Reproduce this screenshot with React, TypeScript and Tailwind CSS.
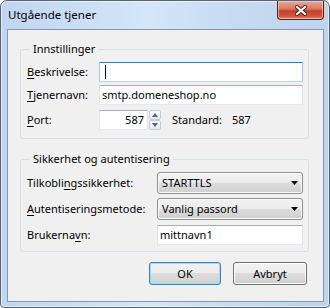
import React from "react";

const font = { fontFamily: '"Noto Sans", "Open Sans", sans-serif' };

const Key: React.FC<{ children: React.ReactNode }> = ({ children }) => (
  <span className="underline underline-offset-[2px] decoration-[1px]">{children}</span>
);

const CloseButton: React.FC = () => (
  <div className="w-[47px] h-[19px] rounded-b-[4px] border border-t-0 border-[#5b2016] bg-[linear-gradient(to_bottom,#e9a99a_0%,#d8765f_45%,#c4402a_55%,#d0583d_85%,#e38a6c_100%)] shadow-[inset_0_0_0_1px_rgba(255,220,210,0.55)] flex items-center justify-center">
    <svg width="12" height="11" viewBox="0 0 12 11">
      <path d="M2 2 L10 9 M10 2 L2 9" stroke="#4a1a12" strokeWidth="4" strokeLinecap="square" />
      <path d="M2 2 L10 9 M10 2 L2 9" stroke="#ffffff" strokeWidth="2.2" strokeLinecap="square" />
    </svg>
  </div>
);

const TextBox: React.FC<{ value?: string; width: string; focused?: boolean; right?: boolean }> = ({
  value,
  width,
  focused,
  right,
}) => (
  <div
    className={`${width} h-[20px] bg-white border flex items-center ${
      focused
        ? "border-[#a4c9e3] border-t-[#3d7bad] border-b-[#b7d9ed]"
        : "border-[#e2e3ea] border-t-[#abadb3] border-b-[#e3e9ef]"
    } ${right ? "justify-end pr-[3px]" : "pl-[2px]"}`}
  >
    {focused ? <span className="ml-[3px] w-[1px] h-[14px] bg-black" /> : <span>{value}</span>}
  </div>
);

const Select: React.FC<{ value: string }> = ({ value }) => (
  <div className="w-[146px] h-[22px] rounded-[3px] border border-[#8e8f8f] bg-[linear-gradient(to_bottom,#f2f2f2_0%,#ebebeb_50%,#dddddd_50%,#cfcfcf_100%)] shadow-[inset_0_0_0_1px_#fcfcfc] flex items-center justify-between pl-[4px] pr-[4px]">
    <span>{value}</span>
    <svg width="7" height="4" viewBox="0 0 7 4">
      <path d="M0 0 H7 L3.5 4 Z" fill="#000" />
    </svg>
  </div>
);

const SpinArrow: React.FC<{ up?: boolean }> = ({ up }) => (
  <div className="h-[10px] w-[12px] rounded-[2px] border border-[#c5ccd6] bg-[linear-gradient(to_bottom,#fbfbfb,#e4e7eb)] flex items-center justify-center">
    <svg width="6" height="4" viewBox="0 0 6 4">
      <path d={up ? "M0 4 H6 L3 0 Z" : "M0 0 H6 L3 4 Z"} fill="#4d6185" />
    </svg>
  </div>
);

const Button: React.FC<{ label: string; primary?: boolean; width: string }> = ({ label, primary, width }) => (
  <button
    className={`${width} h-[23px] rounded-[3px] border bg-[linear-gradient(to_bottom,#f2f2f2_0%,#ebebeb_50%,#dddddd_50%,#cfcfcf_100%)] ${
      primary
        ? "border-[#3c7fb1] shadow-[inset_0_0_0_1px_#98e0fa]"
        : "border-[#707070] shadow-[inset_0_0_0_1px_#fcfcfc]"
    }`}
  >
    {label}
  </button>
);

export default function App() {
  return (
    <div className="w-[330px] h-[308px] text-[11px] text-black leading-[16px]" style={font}>
      <div className="w-full h-full rounded-t-[7px] rounded-b-[4px] border border-[#56637a] bg-[linear-gradient(to_right,#c0d6ee_0%,#d4e6f8_45%,#c7dcf2_70%,#bed4ed_100%)] shadow-[inset_0_0_0_1px_rgba(255,255,255,0.55)] flex flex-col overflow-hidden">
        {/* title bar */}
        <div className="h-[28px] flex justify-between items-start pl-[7px] pr-[5px]">
          <span className="pt-[6px] text-[11.5px]">Utgående tjener</span>
          <CloseButton />
        </div>

        {/* client area */}
        <div className="flex-1 ml-[6px] mr-[5px] mb-[5px] border border-[#8497ae] bg-[#f0f0f0] flex flex-col">
          <fieldset className="ml-[12px] mt-[11px] w-[289px] border border-[#d5dfe5] rounded-[3px] pl-[6px] pr-[5px] pb-[8px]">
            <legend className="ml-[3px] px-[3px]">Innstillinger</legend>
            <div className="flex flex-col pt-[5px]">
              <div className="flex items-center h-[20px]">
                <span className="w-[72px]">
                  <Key>B</Key>eskrivelse:
                </span>
                <TextBox width="w-[204px]" focused />
              </div>
              <div className="flex items-center h-[20px] mt-[3px]">
                <span className="w-[72px]">
                  <Key>T</Key>jenernavn:
                </span>
                <TextBox width="w-[204px]" value="smtp.domeneshop.no" />
              </div>
              <div className="flex items-center h-[21px] mt-[4px]">
                <span className="w-[72px]">
                  <Key>P</Key>ort:
                </span>
                <TextBox width="w-[49px]" value="587" right />
                <div className="flex flex-col ml-[1px]">
                  <SpinArrow up />
                  <SpinArrow />
                </div>
                <span className="ml-[11px]">Standard:</span>
                <span className="ml-[10px]">587</span>
              </div>
            </div>
          </fieldset>

          <fieldset className="ml-[12px] mt-[12px] w-[289px] border border-[#d5dfe5] rounded-[3px] pl-[6px] pr-[5px] pb-[6px]">
            <legend className="ml-[3px] px-[3px]">Sikkerhet og autentisering</legend>
            <div className="flex flex-col pt-[5px]">
              <div className="flex items-center">
                <span className="w-[130px]">
                  Tilkobli<Key>n</Key>gssikkerhet:
                </span>
                <Select value="STARTTLS" />
              </div>
              <div className="flex items-center mt-[4px]">
                <span className="w-[130px]">
                  <Key>A</Key>utentiseringsmetode:
                </span>
                <Select value="Vanlig passord" />
              </div>
              <div className="flex items-center mt-[5px]">
                <span className="w-[130px]">
                  Brukerna<Key>v</Key>n:
                </span>
                <TextBox width="w-[146px]" value="mittnavn1" />
              </div>
            </div>
          </fieldset>

          <div className="flex justify-end gap-[12px] pr-[16px] mt-[10px]">
            <Button label="OK" primary width="w-[72px]" />
            <Button label="Avbryt" width="w-[74px]" />
          </div>
        </div>
      </div>
    </div>
  );
}
